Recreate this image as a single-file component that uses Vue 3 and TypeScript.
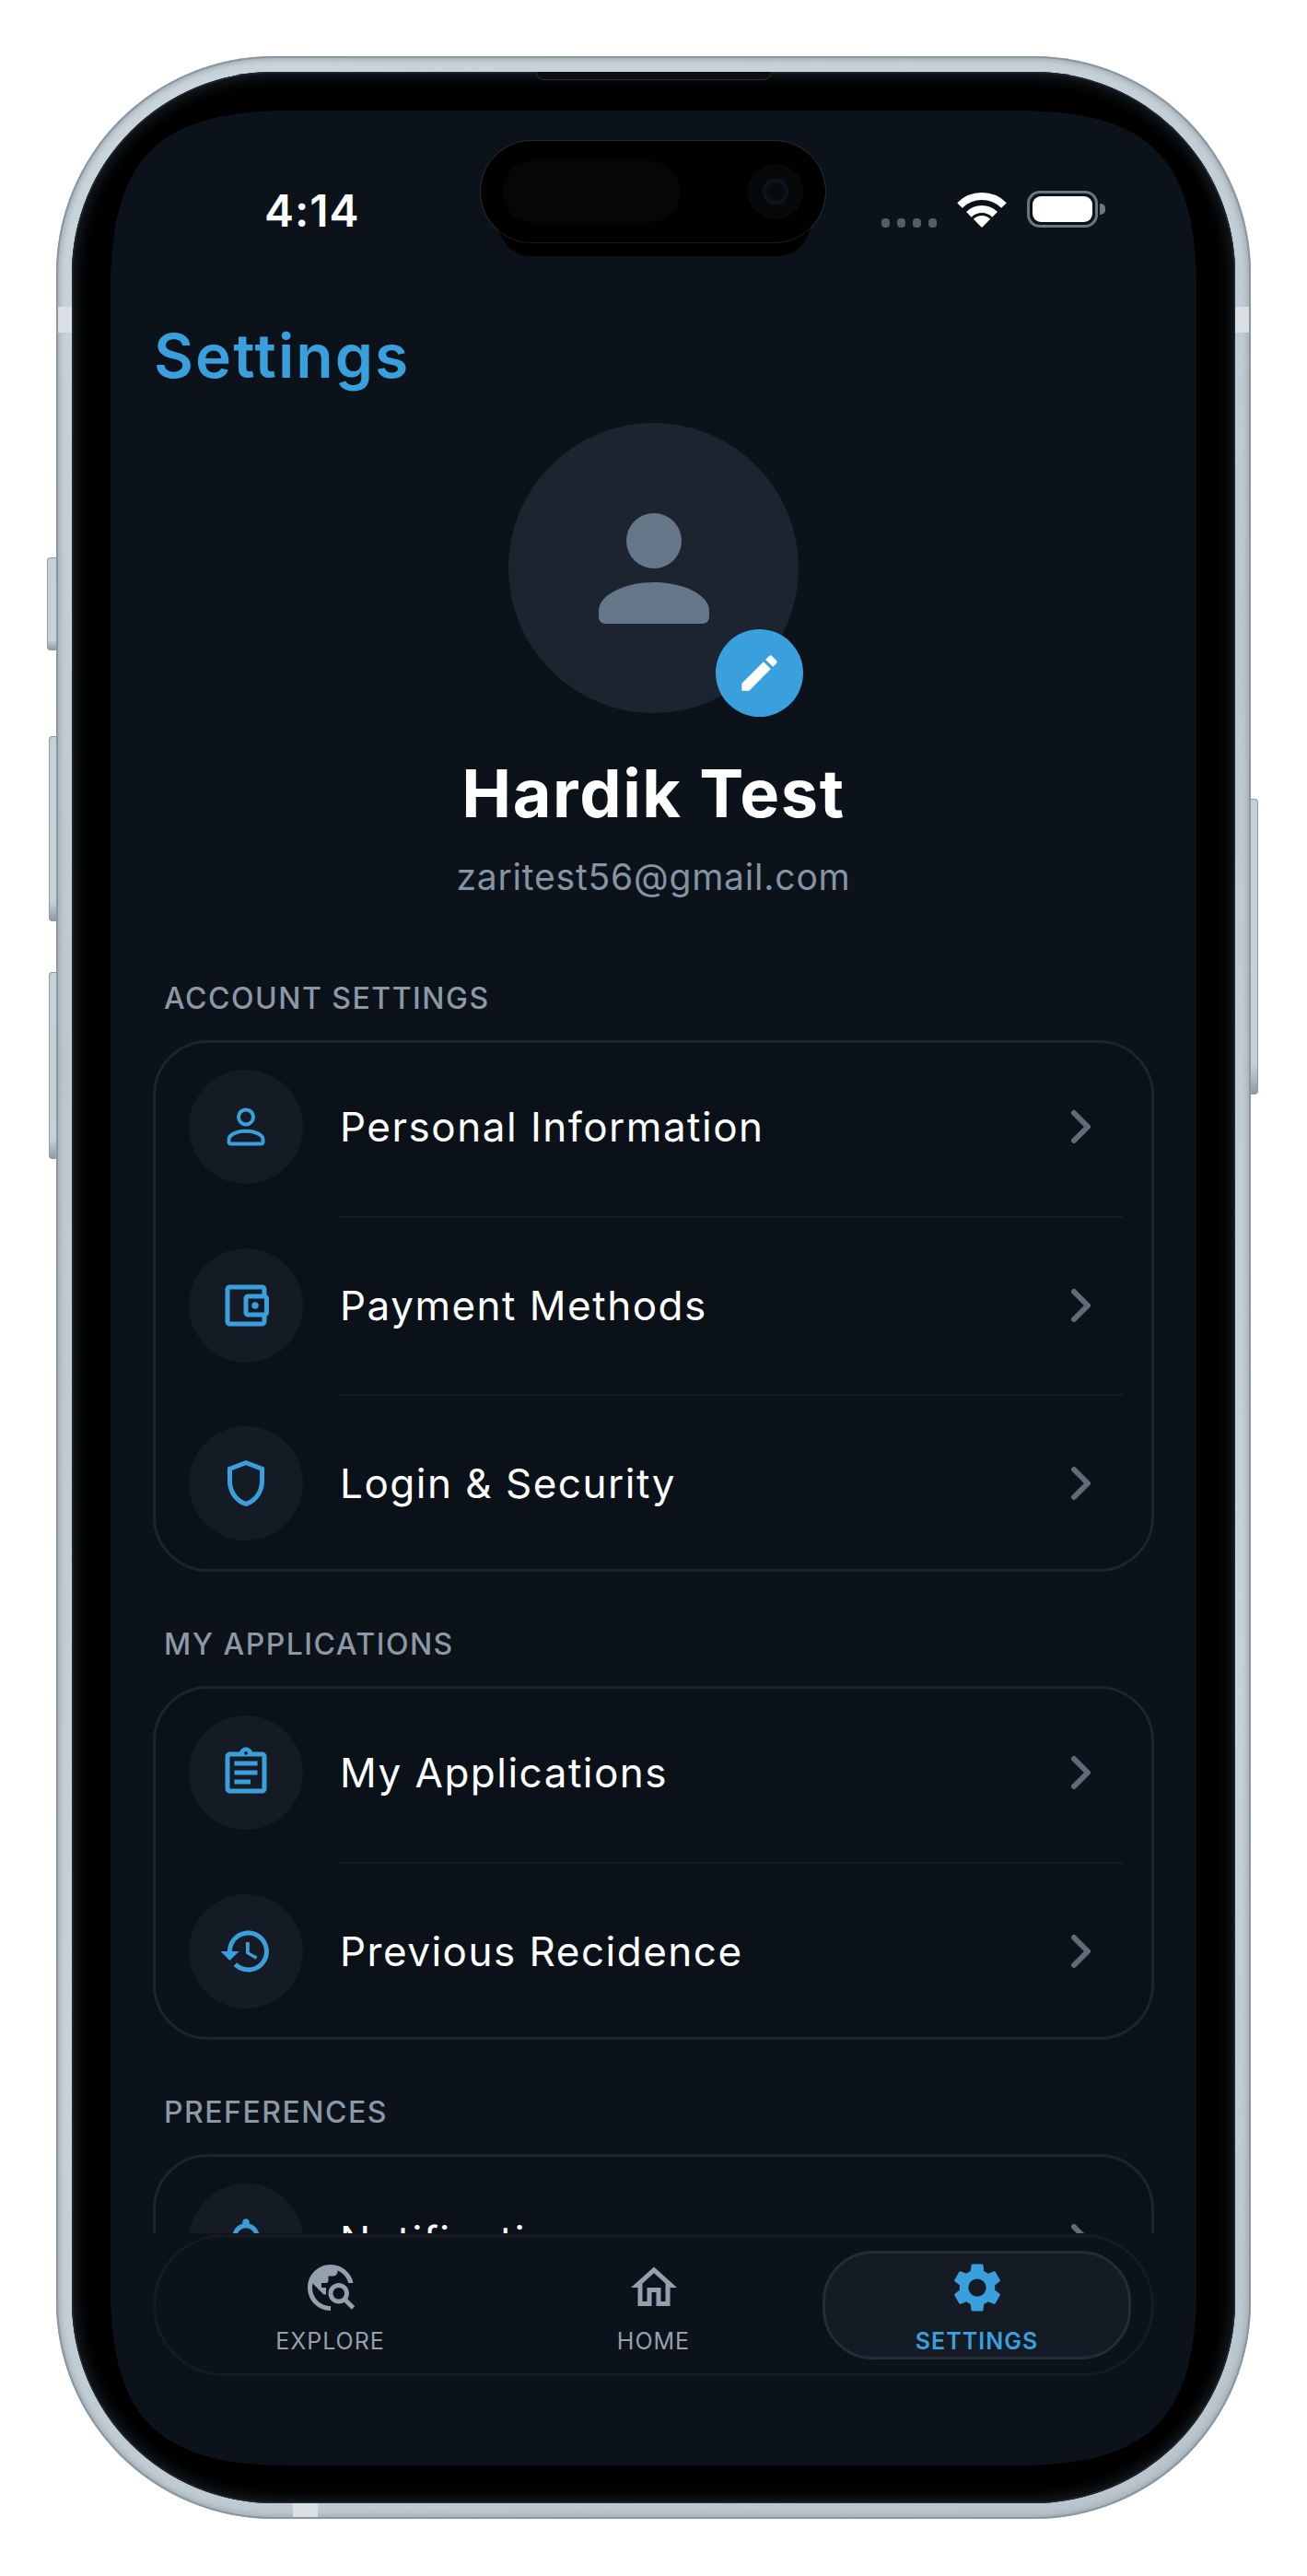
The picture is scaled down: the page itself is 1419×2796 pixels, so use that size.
<script setup lang="ts">
interface Row {
  label: string
  icon: string
  outline?: boolean
}

interface Section {
  title: string
  rows: Row[]
}

const icons: Record<string, string> = {
  person:
    'M12 4.56a3.2 3.2 0 1 1 0 6.4 3.2 3.2 0 0 1 0-6.4zM12 13.8c-3.6 0-7.4 1.5-7.4 3.7v.9c0 .6.4 1 1 1h12.8c.6 0 1-.4 1-1v-.9c0-2.2-3.8-3.7-7.4-3.7z',
  wallet:
    'M21 7.28V5c0-1.1-.9-2-2-2H5c-1.11 0-2 .9-2 2v14c0 1.1.89 2 2 2h14c1.1 0 2-.9 2-2v-2.28c.59-.35 1-.98 1-1.72V9c0-.74-.41-1.37-1-1.72zM20 9v6h-7V9h7zM5 19V5h14v2h-6c-1.1 0-2 .9-2 2v6c0 1.1.9 2 2 2h6v2H5zM16 10.5a1.5 1.5 0 1 0 0 3 1.5 1.5 0 0 0 0-3z',
  shield:
    'M12 2L4 5v6.09c0 5.05 3.41 9.76 8 10.91 4.59-1.15 8-5.86 8-10.91V5l-8-3zm6 9.09c0 4-2.55 7.7-6 8.83-3.45-1.13-6-4.82-6-8.83v-4.7l6-2.25 6 2.25v4.7z',
  clipboard:
    'M7 15h7v2H7zm0-4h10v2H7zm0-4h10v2H7zm12-4h-4.18C14.4 1.84 13.3 1 12 1s-2.4.84-2.82 2H5c-1.1 0-2 .9-2 2v14c0 1.1.9 2 2 2h14c1.1 0 2-.9 2-2V5c0-1.1-.9-2-2-2zm-7-.25c.41 0 .75.34.75.75s-.34.75-.75.75-.75-.34-.75-.75.34-.75.75-.75zM19 19H5V5h14v14z',
  history:
    'M13 3c-4.97 0-9 4.03-9 9H1l3.89 3.89.07.14L9 12H6c0-3.87 3.13-7 7-7s7 3.13 7 7-3.13 7-7 7c-1.93 0-3.68-.79-4.94-2.06l-1.42 1.42C8.27 19.99 10.51 21 13 21c4.97 0 9-4.03 9-9s-4.03-9-9-9zm-1 5v5l4.28 2.54.72-1.21-3.5-2.08V8H12z',
  bell:
    'M12 22c1.1 0 2-.9 2-2h-4c0 1.1.9 2 2 2zm6-6v-5c0-3.07-1.63-5.64-4.5-6.32V4c0-.83-.67-1.5-1.5-1.5s-1.5.67-1.5 1.5v.68C7.64 5.36 6 7.92 6 11v5l-2 2v1h16v-1l-2-2zm-2 1H8v-6c0-2.48 1.51-4.5 4-4.5s4 2.02 4 4.5v6z',
}

const sections: Section[] = [
  {
    title: 'ACCOUNT SETTINGS',
    rows: [
      { label: 'Personal Information', icon: 'person', outline: true },
      { label: 'Payment Methods', icon: 'wallet' },
      { label: 'Login & Security', icon: 'shield' },
    ],
  },
  {
    title: 'MY APPLICATIONS',
    rows: [
      { label: 'My Applications', icon: 'clipboard' },
      { label: 'Previous Recidence', icon: 'history' },
    ],
  },
  {
    title: 'PREFERENCES',
    rows: [{ label: 'Notifications', icon: 'bell' }],
  },
]

const tabs = [
  {
    label: 'EXPLORE',
    size: 60,
    d: 'M19.3 16.9c.4-.7.7-1.5.7-2.4 0-2.5-2-4.5-4.5-4.5S11 12 11 14.5s2 4.5 4.5 4.5c.9 0 1.7-.3 2.4-.7l3.2 3.2 1.4-1.4-3.2-3.2zm-3.8.1c-1.4 0-2.5-1.1-2.5-2.5s1.1-2.5 2.5-2.5 2.5 1.1 2.5 2.5-1.1 2.5-2.5 2.5zM12 20v2C6.48 22 2 17.52 2 12S6.48 2 12 2c4.84 0 8.87 3.44 9.8 8h-2.07c-.64-2.46-2.4-4.47-4.73-5.41V5c0 1.1-.9 2-2 2h-2v2c0 .55-.45 1-1 1H8v2h2v3H9l-4.79-4.79C4.08 10.79 4 11.38 4 12c0 4.41 3.59 8 8 8z',
  },
  {
    label: 'HOME',
    size: 60,
    d: 'M12 5.69l5 4.5V18h-2v-6H9v6H7v-7.81l5-4.5M12 3L2 12h3v8h6v-6h2v6h6v-8h3L12 3z',
  },
  {
    label: 'SETTINGS',
    size: 64,
    active: true,
    d: 'M19.14 12.94c.04-.3.06-.61.06-.94 0-.32-.02-.64-.07-.94l2.03-1.58c.18-.14.23-.41.12-.61l-1.92-3.32c-.12-.22-.37-.29-.59-.22l-2.39.96c-.5-.38-1.03-.7-1.62-.94l-.36-2.54c-.04-.24-.24-.41-.48-.41h-3.84c-.24 0-.43.17-.47.41l-.36 2.54c-.59.24-1.13.57-1.62.94l-2.39-.96c-.22-.08-.47 0-.59.22L2.74 8.87c-.12.21-.08.47.12.61l2.03 1.58c-.05.3-.09.63-.09.94s.02.64.07.94l-2.03 1.58c-.18.14-.23.41-.12.61l1.92 3.32c.12.22.37.29.59.22l2.39-.96c.5.38 1.03.7 1.62.94l.36 2.54c.05.24.24.41.48.41h3.84c.24 0 .44-.17.47-.41l.36-2.54c.59-.24 1.13-.56 1.62-.94l2.39.96c.22.08.47 0 .59-.22l1.92-3.32c.12-.22.07-.47-.12-.61l-2.01-1.58zM12 15.6c-1.98 0-3.6-1.62-3.6-3.6s1.62-3.6 3.6-3.6 3.6 1.62 3.6 3.6-1.62 3.6-3.6 3.6z',
  },
]
</script>

<template>
  <div class="page">
    <div class="phone">
      <span class="btn btn-action"></span>
      <span class="btn btn-up"></span>
      <span class="btn btn-down"></span>
      <span class="btn btn-power"></span>
      <span class="band band-left"></span>
      <span class="band band-right"></span>
      <span class="band band-bottom"></span>

      <div class="bezel">
        <span class="speaker"></span>
        <div class="screen">
          <div class="island-shadow"></div>
          <div class="island">
            <div class="island-sensor"></div>
            <div class="island-camera"><div class="island-lens"></div></div>
          </div>

          <div class="status-bar">
            <span class="clock">4:14</span>
            <div class="status-icons">
              <div class="signal">
                <i></i><i></i><i></i><i></i>
              </div>
              <svg class="wifi" width="54" height="39" viewBox="0 0 54 39">
                <path fill="#fff" d="M27 39 17.8 29.8a13 13 0 0 1 18.4 0z" />
                <path fill="none" stroke="#fff" stroke-width="8" d="M12.9 24.9a20 20 0 0 1 28.2 0" />
                <path fill="none" stroke="#fff" stroke-width="8" d="M3 15a34 34 0 0 1 48 0" />
              </svg>
              <div class="battery">
                <div class="battery-level"></div>
              </div>
              <span class="battery-nub"></span>
            </div>
          </div>

          <div class="scroller">
            <h1 class="title">Settings</h1>

            <div class="profile">
              <div class="avatar">
                <svg width="120" height="120" viewBox="0 0 120 120" fill="#667789">
                  <circle cx="60" cy="30" r="30" />
                  <path d="M60 75C30 75 0 88 0 106v6c0 5 3 8 8 8h104c5 0 8-3 8-8v-6C120 88 90 75 60 75z" />
                </svg>
                <div class="edit-badge">
                  <svg width="51" height="51" viewBox="0 0 24 24" fill="#fff">
                    <path d="M3 17.25V21h3.75L17.81 9.94l-3.75-3.75L3 17.25zM20.71 7.04c.39-.39.39-1.02 0-1.41l-2.34-2.34c-.39-.39-1.02-.39-1.41 0l-1.83 1.83 3.75 3.75 1.83-1.83z" />
                  </svg>
                </div>
              </div>
              <div class="name">Hardik Test</div>
              <div class="email">zaritest56@gmail.com</div>
            </div>

            <section v-for="section in sections" :key="section.title" class="section">
              <h2 class="section-title">{{ section.title }}</h2>
              <div class="card">
                <div v-for="row in section.rows" :key="row.label" class="row">
                  <div class="row-icon">
                    <svg
                      width="60"
                      height="60"
                      viewBox="0 0 24 24"
                      :fill="row.outline ? 'none' : '#3a9fdd'"
                      :stroke="row.outline ? '#3a9fdd' : 'none'"
                      :stroke-width="row.outline ? 1.6 : 0"
                      fill-rule="evenodd"
                    >
                      <path :d="icons[row.icon]" />
                    </svg>
                  </div>
                  <span class="row-label">{{ row.label }}</span>
                  <svg class="chevron" width="25" height="38" viewBox="0 0 25 38" fill="none">
                    <path d="M5 4l15 15L5 34" stroke="#5d6b7a" stroke-width="6" stroke-linecap="round" stroke-linejoin="round" />
                  </svg>
                </div>
              </div>
            </section>
          </div>

          <div class="footer">
            <nav class="tabbar">
              <div v-for="tab in tabs" :key="tab.label" class="tab" :class="{ active: tab.active }">
                <div class="tab-icon">
                  <svg :width="tab.size" :height="tab.size" viewBox="0 0 24 24" fill="currentColor">
                    <path :d="tab.d" />
                  </svg>
                </div>
                <span class="tab-label">{{ tab.label }}</span>
              </div>
            </nav>
          </div>
        </div>
      </div>
    </div>
  </div>
</template>

<style scoped>
.page {
  width: 1419px;
  height: 2796px;
  padding: 61px 61px 62px 61px;
  box-sizing: border-box;
  background: #fff;
  font-family: Inter, "Liberation Sans", sans-serif;
}

.phone {
  position: relative;
  width: 1297px;
  height: 2673px;
  box-sizing: border-box;
  padding: 17px;
  border-radius: 236px;
  background: linear-gradient(160deg, #cbd5dc 0%, #bcc7cf 35%, #c8d2d9 70%, #b8c3cb 100%);
  box-shadow: inset 0 0 0 2px #8a96a0, inset 0 0 6px 4px #a0acb5;
}

.btn {
  position: absolute;
  box-sizing: border-box;
  border: 1px solid #8d99a3;
  border-right: none;
  border-radius: 4px 0 0 4px;
  background: linear-gradient(180deg, #c6d0d7 90%, #8f9ba5);
}

.btn-action {
  left: -10px;
  top: 544px;
  width: 10px;
  height: 101px;
}

.btn-up {
  left: -8px;
  top: 738px;
  width: 8px;
  height: 201px;
}

.btn-down {
  left: -8px;
  top: 994px;
  width: 8px;
  height: 203px;
}

.btn-power {
  right: -8px;
  top: 806px;
  width: 8px;
  height: 321px;
  border: 1px solid #8d99a3;
  border-left: none;
  border-radius: 0 4px 4px 0;
}

.band {
  position: absolute;
  background: #d8e0e6;
}

.band-left {
  left: 2px;
  top: 272px;
  width: 15px;
  height: 28px;
}

.band-right {
  right: 2px;
  top: 272px;
  width: 15px;
  height: 28px;
}

.band-bottom {
  left: 257px;
  bottom: 2px;
  width: 27px;
  height: 15px;
}

.bezel {
  position: relative;
  height: 100%;
  box-sizing: border-box;
  padding: 42px 42px 41px;
  border-radius: 219px;
  background: #000;
  box-shadow: inset 0 0 0 1.5px #20282f, inset 0 0 14px 6px #151b21;
}

.speaker {
  position: absolute;
  left: 504px;
  top: 0;
  width: 255px;
  height: 9px;
  box-sizing: border-box;
  border: 1px solid #262c32;
  border-top: none;
  border-radius: 0 0 8px 8px;
  background: #0b0d0f;
}

.screen {
  position: relative;
  display: flex;
  flex-direction: column;
  height: 100%;
  overflow: hidden;
  clip-path: path("M0 195C0 51 51 0 195 0H984C1128 0 1179 51 1179 195V2361C1179 2505 1128 2556 984 2556H195C51 2556 0 2505 0 2361Z");
  background: #0b1219;
  color: #fff;
}

.island {
  position: absolute;
  z-index: 3;
  left: 402px;
  top: 33px;
  display: flex;
  align-items: center;
  justify-content: space-between;
  width: 374px;
  height: 110px;
  box-sizing: border-box;
  padding: 0 24px;
  border-radius: 55px;
  background: #000;
  box-shadow: 0 0 0 1px rgba(255, 255, 255, 0.1);
}

.island-shadow {
  position: absolute;
  z-index: 2;
  left: 421px;
  top: 60px;
  width: 339px;
  height: 98px;
  border-radius: 0 0 36px 36px;
  background: #000;
}

.island-sensor {
  width: 192px;
  height: 66px;
  border-radius: 30px;
  background: #060606;
}

.island-camera {
  display: flex;
  align-items: center;
  justify-content: center;
  width: 60px;
  height: 60px;
  border-radius: 50%;
  background: #06080a;
}

.island-lens {
  width: 28px;
  height: 28px;
  border-radius: 50%;
  background: radial-gradient(circle, #070a0f 35%, #16222f 100%);
}

.status-bar {
  position: relative;
  flex: none;
  height: 226px;
}

.clock {
  position: absolute;
  left: 167px;
  top: 80px;
  font-size: 48px;
  line-height: 58px;
  font-weight: 600;
  letter-spacing: 1px;
}

.status-icons {
  position: absolute;
  left: 837px;
  top: 87px;
  display: flex;
  align-items: flex-end;
}

.signal {
  display: flex;
  gap: 8px;
  margin-right: 22px;
}

.signal i {
  width: 9px;
  height: 10px;
  border-radius: 4px;
  background: #565c63;
}

.wifi {
  display: block;
  margin-right: 22px;
}

.battery {
  width: 77px;
  height: 40px;
  box-sizing: border-box;
  padding: 3px;
  border: 3px solid #6b7680;
  border-radius: 14px;
}

.battery-level {
  height: 100%;
  border-radius: 9px;
  background: #fff;
}

.battery-nub {
  width: 6px;
  height: 12px;
  margin: 0 0 14px 2px;
  border-radius: 0 5px 5px 0;
  background: #6b7680;
}

.scroller {
  flex: 1;
  min-height: 0;
  overflow: hidden;
  padding: 0 46px;
}

.title {
  margin: 0 0 0 1px;
  font-size: 66px;
  line-height: 80px;
  font-weight: 600;
  letter-spacing: 2.1px;
  color: #3a9fdd;
}

.profile {
  display: flex;
  flex-direction: column;
  align-items: center;
  padding-bottom: 28px;
}

.avatar {
  position: relative;
  display: flex;
  align-items: center;
  justify-content: center;
  width: 315px;
  height: 315px;
  margin-top: 33px;
  border-radius: 50%;
  background: #1c2430;
}

.edit-badge {
  position: absolute;
  left: 225px;
  top: 224px;
  display: flex;
  align-items: center;
  justify-content: center;
  width: 95px;
  height: 95px;
  border-radius: 50%;
  background: #3a9fdd;
}

.name {
  margin-top: 43px;
  font-size: 72px;
  line-height: 88px;
  font-weight: 700;
  letter-spacing: 1.6px;
}

.email {
  margin-top: 22px;
  font-size: 39px;
  line-height: 50px;
  letter-spacing: 0.8px;
  color: #8494a3;
}

.section {
  margin-top: 59px;
}

.section-title {
  margin: 0 0 25px 12px;
  font-size: 32px;
  line-height: 40px;
  font-weight: 500;
  letter-spacing: 1.5px;
  color: #8b98a5;
}

.card {
  padding-bottom: 2px;
  border: 3px solid #1c2430;
  border-radius: 60px;
  background: #0a1119;
}

.row {
  position: relative;
  display: flex;
  align-items: center;
  height: 182px;
  padding: 0 36px;
}

.row + .row {
  margin-top: 11.5px;
}

.row + .row::before {
  content: "";
  position: absolute;
  left: 199px;
  right: 31px;
  top: -6px;
  height: 2px;
  background: #151c26;
}

.row-icon {
  display: flex;
  flex: none;
  align-items: center;
  justify-content: center;
  width: 124px;
  height: 124px;
  margin-right: 40px;
  border-radius: 50%;
  background: #141b25;
}

.row-label {
  flex: 1;
  font-size: 44px;
  font-weight: 400;
  letter-spacing: 1.5px;
  color: #fff;
}

.chevron {
  flex: none;
  margin-right: 28px;
}

.footer {
  position: absolute;
  left: 0;
  right: 0;
  bottom: 0;
  z-index: 1;
  height: 252px;
  box-sizing: border-box;
  padding: 1px 46px 0;
  background: #0b1219;
}

.tabbar {
  display: grid;
  grid-template-columns: repeat(3, 335px);
  gap: 16px;
  height: 154px;
  box-sizing: border-box;
  padding: 15px 22px;
  border: 3px solid #141b25;
  border-radius: 77px;
}

.tab {
  display: flex;
  flex-direction: column;
  align-items: center;
  box-sizing: border-box;
  padding-top: 7px;
  border: 3px solid transparent;
  border-radius: 55px;
  color: #94a0ad;
}

.tab.active {
  border-color: #232c38;
  background: #141b25;
  color: #3a9fdd;
}

.tab-icon {
  display: flex;
  align-items: center;
  justify-content: center;
  height: 60px;
}

.tab-label {
  margin-top: 13px;
  font-size: 25px;
  line-height: 30px;
  letter-spacing: 1px;
}

.tab.active .tab-label {
  font-weight: 600;
}
</style>
